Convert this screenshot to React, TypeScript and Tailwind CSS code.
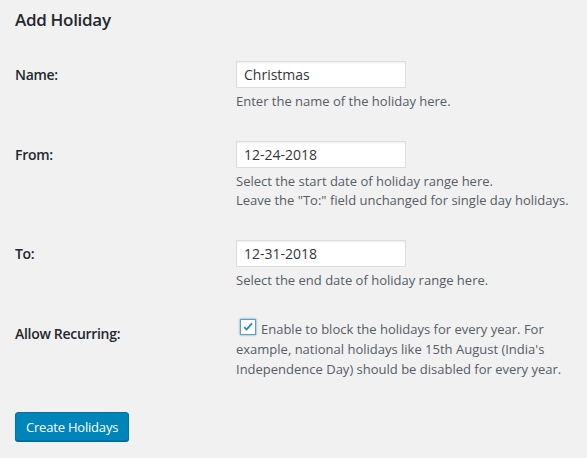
import React from "react";

const font = { fontFamily: '"Open Sans", "Noto Sans", sans-serif' };

function Row({ label, children }: { label: string; children: React.ReactNode }) {
  return (
    <div className="flex">
      <div className="w-[210px] shrink-0 pt-5 text-[14px] leading-[18px] font-semibold text-[#23282d] tracking-[-0.3px]">{label}</div>
      <div className="py-[15px] pl-[11px]">{children}</div>
    </div>
  );
}

function Input({ value }: { value: string }) {
  return (
    <input
      readOnly
      value={value}
      className="block w-[170px] h-[27px] border border-[#dddddd] bg-white px-[7px] text-[14px] text-[#32373c] outline-none shadow-[inset_0_1px_2px_rgba(0,0,0,0.07)]"
      style={font}
    />
  );
}

const desc = "mt-[4px] text-[13px] leading-[19px] text-[#555d66]";

export default function App() {
  return (
    <div className="min-h-[458px] w-[587px] bg-[#f1f1f1] pl-[15px]" style={font}>
      <h2 className="pt-[9px] text-[17px] leading-[22px] font-semibold text-[#23282d] tracking-[-0.3px]">Add Holiday</h2>
      <div className="mt-[15px]">
        <Row label="Name:">
          <Input value="Christmas" />
          <p className={desc}>Enter the name of the holiday here.</p>
        </Row>
        <Row label="From:">
          <Input value="12-24-2018" />
          <p className={desc}>
            Select the start date of holiday range here.
            <br />
            Leave the "To:" field unchanged for single day holidays.
          </p>
        </Row>
        <Row label="To:">
          <Input value="12-31-2018" />
          <p className={desc}>Select the end date of holiday range here.</p>
        </Row>
        <Row label="Allow Recurring:">
          <p className="-mt-[2px] w-[345px] text-[13px] leading-[20px] text-[#555d66]">
            <span className="relative top-[1px] ml-[4px] mr-[5px] inline-flex h-[16px] w-[16px] items-center justify-center border border-[#5b9dd9] bg-white align-[-1px] shadow-[0_0_2px_rgba(30,140,190,0.8)]">
              <svg viewBox="0 0 20 20" className="h-[18px] w-[18px]">
                <path d="M4.5 10.2 L8 13.6 L15.6 4.8" fill="none" stroke="#1e8cbe" strokeWidth="2.6" strokeLinecap="butt" strokeLinejoin="miter" />
              </svg>
            </span>
            Enable to block the holidays for every year. For example, national holidays like 15th August (India's Independence Day) should be disabled for every year.
          </p>
        </Row>
      </div>
      <div className="mt-[18px]">
        <button
          className="h-[29px] rounded-[3px] border border-[#0073aa] bg-[#0085ba] px-[10px] text-[13px] leading-[26px] text-white shadow-[0_1px_0_#006799] tracking-[-0.2px]"
          style={font}
        >
          Create Holidays
        </button>
      </div>
    </div>
  );
}
